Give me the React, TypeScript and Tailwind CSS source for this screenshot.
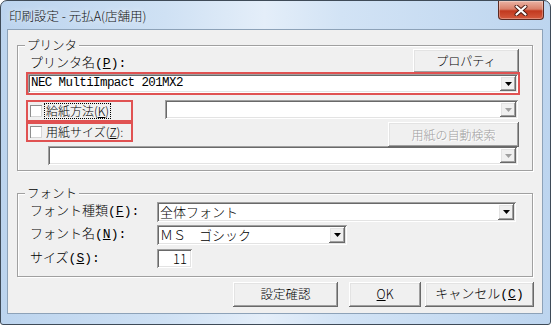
import React from 'react';

const raised =
  'shadow-[inset_-1px_-1px_#696969,inset_1px_1px_#ffffff,inset_-2px_-2px_#a0a0a0,inset_2px_2px_#e3e3e3]';
const sunken =
  'shadow-[inset_1px_1px_#a0a0a0,inset_-1px_-1px_#ffffff,inset_2px_2px_#696969,inset_-2px_-2px_#e3e3e3]';
const ui = "font-['Noto_Sans_CJK_JP',sans-serif] font-light";
const gothic = "font-['Liberation_Mono','Noto_Sans_CJK_JP',monospace] font-light";
const etched = 'border border-[#a0a0a0] shadow-[1px_1px_0_#ffffff,inset_1px_1px_0_#ffffff]';
const red = 'outline-2 outline-[#e05252]';

const Arrow = ({ disabled }: { disabled?: boolean }) => (
  <div className={`w-[16px] my-[2px] mr-[2px] flex items-center justify-center bg-[#f0f0f0] ${raised}`}>
    <svg width="7" height="4" viewBox="0 0 7 4">
      <polygon points="0,0 7,0 3.5,4" fill={disabled ? '#a0a0a0' : '#000000'} />
    </svg>
  </div>
);

interface ComboProps {
  className: string;
  text?: React.ReactNode;
  textClass?: string;
  disabled?: boolean;
}

const Combo: React.FC<ComboProps> = ({ className, text, textClass = '', disabled }) => (
  <div className={`flex bg-white ${sunken} ${className}`}>
    <div className={`flex-1 flex items-center pl-[3px] overflow-hidden whitespace-nowrap text-black ${textClass}`}>
      {text}
    </div>
    <Arrow disabled={disabled} />
  </div>
);

const Btn: React.FC<{ className: string; children: React.ReactNode }> = ({ className, children }) => (
  <button
    type="button"
    className={`flex items-center justify-center bg-[#f0f0f0] text-black ${raised} ${className}`}
  >
    {children}
  </button>
);

const Check: React.FC<{ className: string; children: React.ReactNode; focus?: boolean }> = ({
  className,
  children,
  focus,
}) => (
  <div className={`flex items-center ${red} ${className}`}>
    <span className="ml-[2px] w-[12px] h-[12px] bg-white shadow-[inset_1px_1px_#8e8e8e,inset_-1px_-1px_#d6d6d6]" />
    <span
      className={`${ui} ml-[2px] px-[1px] text-[12px] leading-[14px] text-black border ${
        focus ? 'border-dotted border-black' : 'border-transparent'
      }`}
    >
      {children}
    </span>
  </div>
);

export default function App() {
  return (
    <div className="w-[551px] h-[325px] bg-white">
      <div className="w-[551px] h-[325px] rounded-t-[7px] rounded-b-[3px] border border-[#3f4b58] bg-[linear-gradient(90deg,#bcd4ee_0%,#cfe1f4_30%,#e4eef9_48%,#d2e3f5_62%,#bdd5ef_100%)] flex flex-col overflow-hidden">
        {/* Title bar */}
        <div className="h-[28px] flex items-start">
          <span
            className={`${ui} ml-[8px] mt-[7px] text-[12.5px] leading-[16px] text-[#111111] [text-shadow:0_0_6px_#ffffff]`}
          >
            印刷設定 - 元払A(店舗用)
          </span>
          <div className="ml-auto mr-[6px] w-[46px] h-[19px] rounded-b-[4px] border border-t-0 border-[#5b2a22] bg-[linear-gradient(180deg,#eab3a4_0%,#d9806a_45%,#c2391f_55%,#d45a3e_100%)] shadow-[inset_0_0_0_1px_rgba(255,255,255,0.3)] flex items-center justify-center">
            <svg width="14" height="11" viewBox="0 0 14 11">
              <path d="M2.5 1.5 L11.5 9.5 M11.5 1.5 L2.5 9.5" stroke="#4a1a12" strokeWidth="4" strokeLinecap="round" />
              <path d="M2.5 1.5 L11.5 9.5 M11.5 1.5 L2.5 9.5" stroke="#ffffff" strokeWidth="2.2" strokeLinecap="round" />
            </svg>
          </div>
        </div>

        {/* Client area */}
        <div className="ml-[6px] w-[536px] h-[285px] border border-[#8da2b8] bg-[#f0f0f0] pt-[15px] pl-[9px]">
          {/* Printer group */}
          <div className={`relative w-[516px] h-[126px] ${etched}`}>
            <span className={`${ui} absolute left-[7px] -top-[9px] px-[2px] bg-[#f0f0f0] text-[12.5px] leading-[16px] text-black`}>
              プリンタ
            </span>

            <div className="flex items-start h-[28px] pl-[12px] pr-[13px]">
              <span className={`${gothic} mt-[10px] text-[13px] leading-[16px] text-black`}>
                プリンタ名(<span className="underline">P</span>):
              </span>
              <Btn className={`${ui} ml-auto mt-[3px] w-[106px] h-[24px] text-[12px]`}>プロパティ</Btn>
            </div>

            <Combo
              className={`ml-[10px] w-[490px] h-[19px] ${red}`}
              text="NEC MultiImpact 201MX2"
              textClass="font-['Liberation_Mono',monospace] text-[12.5px] tracking-[-0.6px]"
            />

            <div className="flex items-start mt-[7px] h-[20px]">
              <Check className="ml-[10px] mt-[2px] w-[103px] h-[18px]" focus>
                給紙方法(<span className="underline">K</span>)
              </Check>
              <Combo className="ml-[34px] w-[353px] h-[19px]" disabled />
            </div>

            <div className="flex items-start h-[27px]">
              <Check className="ml-[10px] mt-[4px] w-[103px] h-[16px]">
                用紙サイズ(<span className="underline">Z</span>):
              </Check>
              <Btn className={`${ui} ml-auto mr-[13px] mt-[2px] w-[131px] h-[25px] text-[12px] !text-[#a0a0a0] [text-shadow:1px_1px_0_#ffffff]`}>
                用紙の自動検索
              </Btn>
            </div>

            <Combo className="-mt-[1px] ml-[30px] w-[470px] h-[19px]" disabled />
          </div>

          {/* Font group */}
          <div className={`relative mt-[22px] w-[516px] h-[84px] ${etched}`}>
            <span className={`${ui} absolute left-[7px] -top-[9px] px-[2px] bg-[#f0f0f0] text-[12.5px] leading-[16px] text-black`}>
              フォント
            </span>

            <div className="flex items-center mt-[8px] h-[20px]">
              <span className={`${gothic} w-[139px] pl-[12px] text-[13px] leading-[16px] text-black`}>
                フォント種類(<span className="underline">F</span>):
              </span>
              <Combo className="w-[359px] h-[20px]" text="全体フォント" textClass={`${ui} text-[13px]`} />
            </div>

            <div className="flex items-center mt-[3px] h-[20px]">
              <span className={`${gothic} w-[139px] pl-[12px] text-[13px] leading-[16px] text-black`}>
                フォント名(<span className="underline">N</span>):
              </span>
              <Combo className="w-[190px] h-[20px]" text="ＭＳ　ゴシック" textClass={`${ui} text-[13px]`} />
            </div>

            <div className="flex items-center mt-[4px] h-[19px]">
              <span className={`${gothic} w-[139px] pl-[12px] text-[13px] leading-[16px] text-black`}>
                サイズ(<span className="underline">S</span>):
              </span>
              <div className={`w-[35px] h-[19px] bg-white ${sunken} flex items-center justify-end pr-[5px] ${ui} text-[13px] text-black`}>
                11
              </div>
            </div>
          </div>

          {/* Buttons */}
          <div className="flex justify-end pr-[8px] mt-[5px]">
            <Btn className={`${ui} w-[105px] h-[25px] text-[12.5px]`}>設定確認</Btn>
            <Btn className={`${ui} ml-[11px] w-[72px] h-[25px] text-[12.5px]`}>
              <span className="underline">O</span>K
            </Btn>
            <Btn className={`${gothic} ml-[4px] w-[109px] h-[25px] text-[13px]`}>
              キャンセル(<span className="underline">C</span>)
            </Btn>
          </div>
        </div>
      </div>
    </div>
  );
}
